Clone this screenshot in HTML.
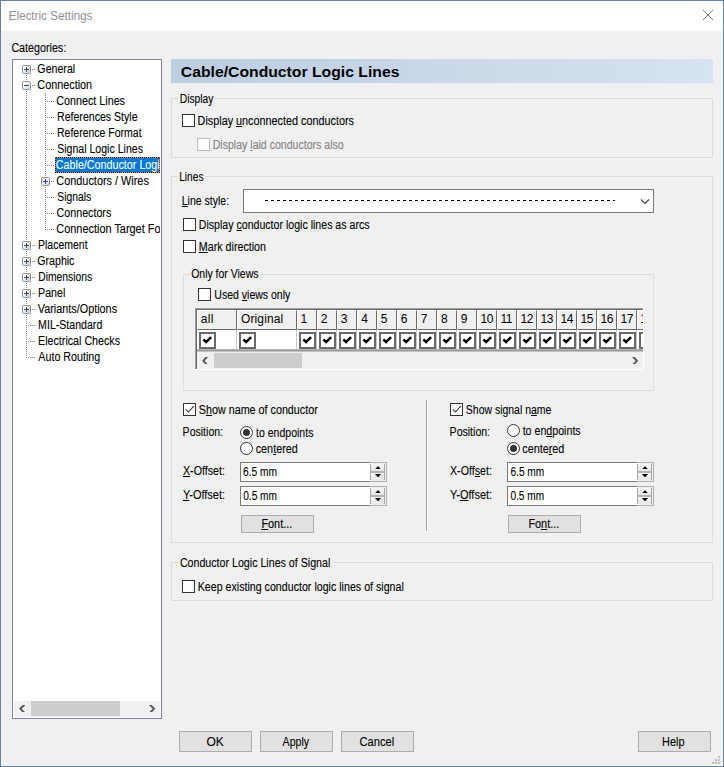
<!DOCTYPE html><html><head><meta charset="utf-8"><title>Electric Settings</title><style>
html,body{margin:0;padding:0;}
body{width:724px;height:767px;position:relative;overflow:hidden;background:#f0f0f0;font-family:'Liberation Sans', sans-serif;font-size:11px;color:#000;}
body div,body svg{position:absolute;}
.t{position:absolute;white-space:pre;line-height:1;-webkit-text-stroke:0.1px currentColor;}
u{text-decoration:underline;}
</style></head><body>
<div style="left:0px;top:0px;width:724px;height:767px;background:#f0f0f0;"></div><div style="left:1px;top:31px;width:722px;height:735px;box-sizing:border-box;border:1px solid #f5f5f5;border-top:none;"></div><div style="left:1px;top:1px;width:722px;height:30px;background:#fff;"></div><div style="left:0px;top:0px;width:724px;height:1px;background:#6183a2;"></div><div style="left:0px;top:0px;width:1px;height:767px;background:#6183a2;"></div><div style="left:723px;top:0px;width:1px;height:767px;background:#6183a2;"></div><div style="left:0px;top:766px;width:724px;height:1px;background:#6183a2;"></div><svg style="left:703px;top:10px" width="10" height="10" viewBox="0 0 10 10"><path d="M0 0 L10 10 M10 0 L0 10" stroke="#747474" stroke-width="1" fill="none"/></svg><div style="left:12px;top:59px;width:150px;height:660px;background:#fff;border:1px solid #7b8694;box-sizing:border-box;"></div><div style="left:26px;top:75px;width:1px;height:283px;background:repeating-linear-gradient(180deg,#808080 0 1px,transparent 1px 2px);"></div><div style="left:45px;top:93px;width:1px;height:137px;background:repeating-linear-gradient(180deg,#808080 0 1px,transparent 1px 2px);"></div><div style="left:32px;top:69px;width:3px;height:1px;background:repeating-linear-gradient(90deg,#808080 0 1px,transparent 1px 2px);"></div><div style="left:32px;top:85px;width:3px;height:1px;background:repeating-linear-gradient(90deg,#808080 0 1px,transparent 1px 2px);"></div><div style="left:47px;top:101px;width:7px;height:1px;background:repeating-linear-gradient(90deg,#808080 0 1px,transparent 1px 2px);"></div><div style="left:47px;top:117px;width:7px;height:1px;background:repeating-linear-gradient(90deg,#808080 0 1px,transparent 1px 2px);"></div><div style="left:47px;top:133px;width:7px;height:1px;background:repeating-linear-gradient(90deg,#808080 0 1px,transparent 1px 2px);"></div><div style="left:47px;top:149px;width:7px;height:1px;background:repeating-linear-gradient(90deg,#808080 0 1px,transparent 1px 2px);"></div><div style="left:47px;top:165px;width:7px;height:1px;background:repeating-linear-gradient(90deg,#808080 0 1px,transparent 1px 2px);"></div><div style="left:55px;top:157px;width:105px;height:16px;background:#0078d7;"></div><div style="left:55px;top:157px;width:105px;height:1px;background:repeating-linear-gradient(90deg,#ff8728 0 1px,#101010 1px 2px);"></div><div style="left:55px;top:172px;width:105px;height:1px;background:repeating-linear-gradient(90deg,#101010 0 1px,#ff8728 1px 2px);"></div><div style="left:55px;top:157px;width:1px;height:16px;background:repeating-linear-gradient(180deg,#ff8728 0 1px,#101010 1px 2px);"></div><div style="left:159px;top:157px;width:1px;height:16px;background:repeating-linear-gradient(180deg,#ff8728 0 1px,#101010 1px 2px);"></div><div style="left:55px;top:157px;width:105px;height:16px;overflow:hidden"><span class="t" id="t8" style="left:0px;top:2px;font-size:12px;transform:translateX(0.80px) scaleX(0.8950);transform-origin:0 0;color:#fff;">Cable/Conductor Logic Lines</span></div><div style="left:51px;top:181px;width:3px;height:1px;background:repeating-linear-gradient(90deg,#808080 0 1px,transparent 1px 2px);"></div><div style="left:47px;top:197px;width:7px;height:1px;background:repeating-linear-gradient(90deg,#808080 0 1px,transparent 1px 2px);"></div><div style="left:47px;top:213px;width:7px;height:1px;background:repeating-linear-gradient(90deg,#808080 0 1px,transparent 1px 2px);"></div><div style="left:47px;top:229px;width:7px;height:1px;background:repeating-linear-gradient(90deg,#808080 0 1px,transparent 1px 2px);"></div><div style="left:55px;top:221px;width:105px;height:16px;overflow:hidden"><span class="t" id="t12" style="left:1px;top:2px;font-size:12px;transform:translateX(0.30px) scaleX(0.9100);transform-origin:0 0;">Connection Target Format</span></div><div style="left:32px;top:245px;width:3px;height:1px;background:repeating-linear-gradient(90deg,#808080 0 1px,transparent 1px 2px);"></div><div style="left:32px;top:261px;width:3px;height:1px;background:repeating-linear-gradient(90deg,#808080 0 1px,transparent 1px 2px);"></div><div style="left:32px;top:277px;width:3px;height:1px;background:repeating-linear-gradient(90deg,#808080 0 1px,transparent 1px 2px);"></div><div style="left:32px;top:293px;width:3px;height:1px;background:repeating-linear-gradient(90deg,#808080 0 1px,transparent 1px 2px);"></div><div style="left:32px;top:309px;width:3px;height:1px;background:repeating-linear-gradient(90deg,#808080 0 1px,transparent 1px 2px);"></div><div style="left:28px;top:325px;width:7px;height:1px;background:repeating-linear-gradient(90deg,#808080 0 1px,transparent 1px 2px);"></div><div style="left:28px;top:341px;width:7px;height:1px;background:repeating-linear-gradient(90deg,#808080 0 1px,transparent 1px 2px);"></div><div style="left:28px;top:357px;width:7px;height:1px;background:repeating-linear-gradient(90deg,#808080 0 1px,transparent 1px 2px);"></div><div style="left:22px;top:65px;width:9px;height:9px;box-sizing:border-box;border:1px solid #919191;border-radius:1.5px;background:linear-gradient(135deg,#fff 20%,#d2d2d2);"></div><div style="left:24px;top:69px;width:5px;height:1px;background:#2d4a9a;"></div><div style="left:26px;top:67px;width:1px;height:5px;background:#2d4a9a;"></div><div style="left:22px;top:81px;width:9px;height:9px;box-sizing:border-box;border:1px solid #919191;border-radius:1.5px;background:linear-gradient(135deg,#fff 20%,#d2d2d2);"></div><div style="left:24px;top:85px;width:5px;height:1px;background:#2d4a9a;"></div><div style="left:41px;top:177px;width:9px;height:9px;box-sizing:border-box;border:1px solid #919191;border-radius:1.5px;background:linear-gradient(135deg,#fff 20%,#d2d2d2);"></div><div style="left:43px;top:181px;width:5px;height:1px;background:#2d4a9a;"></div><div style="left:45px;top:179px;width:1px;height:5px;background:#2d4a9a;"></div><div style="left:22px;top:241px;width:9px;height:9px;box-sizing:border-box;border:1px solid #919191;border-radius:1.5px;background:linear-gradient(135deg,#fff 20%,#d2d2d2);"></div><div style="left:24px;top:245px;width:5px;height:1px;background:#2d4a9a;"></div><div style="left:26px;top:243px;width:1px;height:5px;background:#2d4a9a;"></div><div style="left:22px;top:257px;width:9px;height:9px;box-sizing:border-box;border:1px solid #919191;border-radius:1.5px;background:linear-gradient(135deg,#fff 20%,#d2d2d2);"></div><div style="left:24px;top:261px;width:5px;height:1px;background:#2d4a9a;"></div><div style="left:26px;top:259px;width:1px;height:5px;background:#2d4a9a;"></div><div style="left:22px;top:273px;width:9px;height:9px;box-sizing:border-box;border:1px solid #919191;border-radius:1.5px;background:linear-gradient(135deg,#fff 20%,#d2d2d2);"></div><div style="left:24px;top:277px;width:5px;height:1px;background:#2d4a9a;"></div><div style="left:26px;top:275px;width:1px;height:5px;background:#2d4a9a;"></div><div style="left:22px;top:289px;width:9px;height:9px;box-sizing:border-box;border:1px solid #919191;border-radius:1.5px;background:linear-gradient(135deg,#fff 20%,#d2d2d2);"></div><div style="left:24px;top:293px;width:5px;height:1px;background:#2d4a9a;"></div><div style="left:26px;top:291px;width:1px;height:5px;background:#2d4a9a;"></div><div style="left:22px;top:305px;width:9px;height:9px;box-sizing:border-box;border:1px solid #919191;border-radius:1.5px;background:linear-gradient(135deg,#fff 20%,#d2d2d2);"></div><div style="left:24px;top:309px;width:5px;height:1px;background:#2d4a9a;"></div><div style="left:26px;top:307px;width:1px;height:5px;background:#2d4a9a;"></div><div style="left:14px;top:701px;width:146px;height:16px;background:#f0f0f0;"></div><div style="left:31px;top:701px;width:89px;height:15px;background:#cdcdcd;"></div><svg style="left:18.8px;top:704.8px" width="6.4" height="7.4" viewBox="0 0 6.4 7.4"><path d="M3.70 0.00 L6.40 0.00 L2.70 3.70 L6.40 7.40 L3.70 7.40 L0.00 3.70Z" fill="#555"/></svg><svg style="left:149.0px;top:704.8px" width="6.4" height="7.4" viewBox="0 0 6.4 7.4"><path d="M2.70 0.00 L0.00 0.00 L3.70 3.70 L0.00 7.40 L2.70 7.40 L6.40 3.70Z" fill="#555"/></svg><div style="left:171px;top:59px;width:542px;height:24px;background:linear-gradient(90deg,#bdcde0,#d6e3f0);"></div><div style="left:171px;top:98px;width:542px;height:60px;box-sizing:border-box;border:1px solid #dcdcdc;"></div><div style="left:178px;top:98px;width:37px;height:1px;background:#f0f0f0;"></div><div style="left:171px;top:176px;width:542px;height:367px;box-sizing:border-box;border:1px solid #dcdcdc;"></div><div style="left:177.5px;top:176px;width:27.5px;height:1px;background:#f0f0f0;"></div><div style="left:183px;top:274px;width:471px;height:117px;box-sizing:border-box;border:1px solid #dcdcdc;"></div><div style="left:189.5px;top:274px;width:70.5px;height:1px;background:#f0f0f0;"></div><div style="left:171px;top:562px;width:542px;height:39px;box-sizing:border-box;border:1px solid #dcdcdc;"></div><div style="left:178px;top:562px;width:153.5px;height:1px;background:#f0f0f0;"></div><div style="left:182px;top:114px;width:13px;height:13px;box-sizing:border-box;border:1px solid #333;background:#fff;"></div><div style="left:197px;top:138px;width:13px;height:13px;box-sizing:border-box;border:1px solid #bcbcbc;background:#fff;"></div><div style="left:243px;top:189px;width:411px;height:24px;box-sizing:border-box;border:1px solid #7a7a7a;background:#fff;"></div><div style="left:265px;top:200px;width:350px;height:1px;background:repeating-linear-gradient(90deg,#000 0 3px,transparent 3px 6px);"></div><svg style="left:640px;top:198px" width="10" height="7" viewBox="0 0 10 7"><path d="M1 1.5 L5 5.5 L9 1.5" stroke="#404040" stroke-width="1.1" fill="none"/></svg><div style="left:183px;top:218px;width:13px;height:13px;box-sizing:border-box;border:1px solid #333;background:#fff;"></div><div style="left:183px;top:240px;width:13px;height:13px;box-sizing:border-box;border:1px solid #333;background:#fff;"></div><div style="left:198px;top:288px;width:13px;height:13px;box-sizing:border-box;border:1px solid #333;background:#fff;"></div><div style="left:195px;top:308px;width:449px;height:62px;background:#f0f0f0;"></div><div style="left:195px;top:308px;width:449px;height:1px;background:#a0a0a0;"></div><div style="left:195px;top:308px;width:1px;height:62px;background:#a0a0a0;"></div><div style="left:196px;top:309px;width:447px;height:1px;background:#696969;"></div><div style="left:196px;top:309px;width:1px;height:60px;background:#696969;"></div><div style="left:195px;top:369px;width:449px;height:1px;background:#fff;"></div><div style="left:643px;top:308px;width:1px;height:62px;background:#fff;"></div><div style="left:197px;top:330px;width:446px;height:19px;background:#fff;"></div><div style="left:197px;top:310px;width:40px;height:20px;box-sizing:border-box;background:#f0f0f0;border-right:1px solid #696969;border-bottom:1px solid #696969;border-left:1px solid #fff;border-top:1px solid #fff;"></div><div style="left:236px;top:330px;width:1px;height:19px;background:#c8c8c8;"></div><div style="left:199px;top:332px;width:17px;height:17px;box-sizing:border-box;border:2px solid #696969;background:#fff;"></div><svg style="left:199px;top:332px" width="17" height="17" viewBox="0 0 17 17"><path d="M4.4 7.4 L7.1 10.1 L12.1 5.1" stroke="#000" stroke-width="2.5" fill="none"/></svg><div style="left:237px;top:310px;width:60px;height:20px;box-sizing:border-box;background:#f0f0f0;border-right:1px solid #696969;border-bottom:1px solid #696969;border-left:1px solid #fff;border-top:1px solid #fff;"></div><div style="left:296px;top:330px;width:1px;height:19px;background:#c8c8c8;"></div><div style="left:239px;top:332px;width:17px;height:17px;box-sizing:border-box;border:2px solid #696969;background:#fff;"></div><svg style="left:239px;top:332px" width="17" height="17" viewBox="0 0 17 17"><path d="M4.4 7.4 L7.1 10.1 L12.1 5.1" stroke="#000" stroke-width="2.5" fill="none"/></svg><div style="left:297px;top:310px;width:20px;height:20px;box-sizing:border-box;background:#f0f0f0;border-right:1px solid #696969;border-bottom:1px solid #696969;border-left:1px solid #fff;border-top:1px solid #fff;"></div><div style="left:316px;top:330px;width:1px;height:19px;background:#c8c8c8;"></div><div style="left:299px;top:332px;width:17px;height:17px;box-sizing:border-box;border:2px solid #696969;background:#fff;"></div><svg style="left:299px;top:332px" width="17" height="17" viewBox="0 0 17 17"><path d="M4.4 7.4 L7.1 10.1 L12.1 5.1" stroke="#000" stroke-width="2.5" fill="none"/></svg><div style="left:317px;top:310px;width:20px;height:20px;box-sizing:border-box;background:#f0f0f0;border-right:1px solid #696969;border-bottom:1px solid #696969;border-left:1px solid #fff;border-top:1px solid #fff;"></div><div style="left:336px;top:330px;width:1px;height:19px;background:#c8c8c8;"></div><div style="left:319px;top:332px;width:17px;height:17px;box-sizing:border-box;border:2px solid #696969;background:#fff;"></div><svg style="left:319px;top:332px" width="17" height="17" viewBox="0 0 17 17"><path d="M4.4 7.4 L7.1 10.1 L12.1 5.1" stroke="#000" stroke-width="2.5" fill="none"/></svg><div style="left:337px;top:310px;width:20px;height:20px;box-sizing:border-box;background:#f0f0f0;border-right:1px solid #696969;border-bottom:1px solid #696969;border-left:1px solid #fff;border-top:1px solid #fff;"></div><div style="left:356px;top:330px;width:1px;height:19px;background:#c8c8c8;"></div><div style="left:339px;top:332px;width:17px;height:17px;box-sizing:border-box;border:2px solid #696969;background:#fff;"></div><svg style="left:339px;top:332px" width="17" height="17" viewBox="0 0 17 17"><path d="M4.4 7.4 L7.1 10.1 L12.1 5.1" stroke="#000" stroke-width="2.5" fill="none"/></svg><div style="left:357px;top:310px;width:20px;height:20px;box-sizing:border-box;background:#f0f0f0;border-right:1px solid #696969;border-bottom:1px solid #696969;border-left:1px solid #fff;border-top:1px solid #fff;"></div><div style="left:376px;top:330px;width:1px;height:19px;background:#c8c8c8;"></div><div style="left:359px;top:332px;width:17px;height:17px;box-sizing:border-box;border:2px solid #696969;background:#fff;"></div><svg style="left:359px;top:332px" width="17" height="17" viewBox="0 0 17 17"><path d="M4.4 7.4 L7.1 10.1 L12.1 5.1" stroke="#000" stroke-width="2.5" fill="none"/></svg><div style="left:377px;top:310px;width:20px;height:20px;box-sizing:border-box;background:#f0f0f0;border-right:1px solid #696969;border-bottom:1px solid #696969;border-left:1px solid #fff;border-top:1px solid #fff;"></div><div style="left:396px;top:330px;width:1px;height:19px;background:#c8c8c8;"></div><div style="left:379px;top:332px;width:17px;height:17px;box-sizing:border-box;border:2px solid #696969;background:#fff;"></div><svg style="left:379px;top:332px" width="17" height="17" viewBox="0 0 17 17"><path d="M4.4 7.4 L7.1 10.1 L12.1 5.1" stroke="#000" stroke-width="2.5" fill="none"/></svg><div style="left:397px;top:310px;width:20px;height:20px;box-sizing:border-box;background:#f0f0f0;border-right:1px solid #696969;border-bottom:1px solid #696969;border-left:1px solid #fff;border-top:1px solid #fff;"></div><div style="left:416px;top:330px;width:1px;height:19px;background:#c8c8c8;"></div><div style="left:399px;top:332px;width:17px;height:17px;box-sizing:border-box;border:2px solid #696969;background:#fff;"></div><svg style="left:399px;top:332px" width="17" height="17" viewBox="0 0 17 17"><path d="M4.4 7.4 L7.1 10.1 L12.1 5.1" stroke="#000" stroke-width="2.5" fill="none"/></svg><div style="left:417px;top:310px;width:20px;height:20px;box-sizing:border-box;background:#f0f0f0;border-right:1px solid #696969;border-bottom:1px solid #696969;border-left:1px solid #fff;border-top:1px solid #fff;"></div><div style="left:436px;top:330px;width:1px;height:19px;background:#c8c8c8;"></div><div style="left:419px;top:332px;width:17px;height:17px;box-sizing:border-box;border:2px solid #696969;background:#fff;"></div><svg style="left:419px;top:332px" width="17" height="17" viewBox="0 0 17 17"><path d="M4.4 7.4 L7.1 10.1 L12.1 5.1" stroke="#000" stroke-width="2.5" fill="none"/></svg><div style="left:437px;top:310px;width:20px;height:20px;box-sizing:border-box;background:#f0f0f0;border-right:1px solid #696969;border-bottom:1px solid #696969;border-left:1px solid #fff;border-top:1px solid #fff;"></div><div style="left:456px;top:330px;width:1px;height:19px;background:#c8c8c8;"></div><div style="left:439px;top:332px;width:17px;height:17px;box-sizing:border-box;border:2px solid #696969;background:#fff;"></div><svg style="left:439px;top:332px" width="17" height="17" viewBox="0 0 17 17"><path d="M4.4 7.4 L7.1 10.1 L12.1 5.1" stroke="#000" stroke-width="2.5" fill="none"/></svg><div style="left:457px;top:310px;width:20px;height:20px;box-sizing:border-box;background:#f0f0f0;border-right:1px solid #696969;border-bottom:1px solid #696969;border-left:1px solid #fff;border-top:1px solid #fff;"></div><div style="left:476px;top:330px;width:1px;height:19px;background:#c8c8c8;"></div><div style="left:459px;top:332px;width:17px;height:17px;box-sizing:border-box;border:2px solid #696969;background:#fff;"></div><svg style="left:459px;top:332px" width="17" height="17" viewBox="0 0 17 17"><path d="M4.4 7.4 L7.1 10.1 L12.1 5.1" stroke="#000" stroke-width="2.5" fill="none"/></svg><div style="left:477px;top:310px;width:20px;height:20px;box-sizing:border-box;background:#f0f0f0;border-right:1px solid #696969;border-bottom:1px solid #696969;border-left:1px solid #fff;border-top:1px solid #fff;"></div><div style="left:496px;top:330px;width:1px;height:19px;background:#c8c8c8;"></div><div style="left:479px;top:332px;width:17px;height:17px;box-sizing:border-box;border:2px solid #696969;background:#fff;"></div><svg style="left:479px;top:332px" width="17" height="17" viewBox="0 0 17 17"><path d="M4.4 7.4 L7.1 10.1 L12.1 5.1" stroke="#000" stroke-width="2.5" fill="none"/></svg><div style="left:497px;top:310px;width:20px;height:20px;box-sizing:border-box;background:#f0f0f0;border-right:1px solid #696969;border-bottom:1px solid #696969;border-left:1px solid #fff;border-top:1px solid #fff;"></div><div style="left:516px;top:330px;width:1px;height:19px;background:#c8c8c8;"></div><div style="left:499px;top:332px;width:17px;height:17px;box-sizing:border-box;border:2px solid #696969;background:#fff;"></div><svg style="left:499px;top:332px" width="17" height="17" viewBox="0 0 17 17"><path d="M4.4 7.4 L7.1 10.1 L12.1 5.1" stroke="#000" stroke-width="2.5" fill="none"/></svg><div style="left:517px;top:310px;width:20px;height:20px;box-sizing:border-box;background:#f0f0f0;border-right:1px solid #696969;border-bottom:1px solid #696969;border-left:1px solid #fff;border-top:1px solid #fff;"></div><div style="left:536px;top:330px;width:1px;height:19px;background:#c8c8c8;"></div><div style="left:519px;top:332px;width:17px;height:17px;box-sizing:border-box;border:2px solid #696969;background:#fff;"></div><svg style="left:519px;top:332px" width="17" height="17" viewBox="0 0 17 17"><path d="M4.4 7.4 L7.1 10.1 L12.1 5.1" stroke="#000" stroke-width="2.5" fill="none"/></svg><div style="left:537px;top:310px;width:20px;height:20px;box-sizing:border-box;background:#f0f0f0;border-right:1px solid #696969;border-bottom:1px solid #696969;border-left:1px solid #fff;border-top:1px solid #fff;"></div><div style="left:556px;top:330px;width:1px;height:19px;background:#c8c8c8;"></div><div style="left:539px;top:332px;width:17px;height:17px;box-sizing:border-box;border:2px solid #696969;background:#fff;"></div><svg style="left:539px;top:332px" width="17" height="17" viewBox="0 0 17 17"><path d="M4.4 7.4 L7.1 10.1 L12.1 5.1" stroke="#000" stroke-width="2.5" fill="none"/></svg><div style="left:557px;top:310px;width:20px;height:20px;box-sizing:border-box;background:#f0f0f0;border-right:1px solid #696969;border-bottom:1px solid #696969;border-left:1px solid #fff;border-top:1px solid #fff;"></div><div style="left:576px;top:330px;width:1px;height:19px;background:#c8c8c8;"></div><div style="left:559px;top:332px;width:17px;height:17px;box-sizing:border-box;border:2px solid #696969;background:#fff;"></div><svg style="left:559px;top:332px" width="17" height="17" viewBox="0 0 17 17"><path d="M4.4 7.4 L7.1 10.1 L12.1 5.1" stroke="#000" stroke-width="2.5" fill="none"/></svg><div style="left:577px;top:310px;width:20px;height:20px;box-sizing:border-box;background:#f0f0f0;border-right:1px solid #696969;border-bottom:1px solid #696969;border-left:1px solid #fff;border-top:1px solid #fff;"></div><div style="left:596px;top:330px;width:1px;height:19px;background:#c8c8c8;"></div><div style="left:579px;top:332px;width:17px;height:17px;box-sizing:border-box;border:2px solid #696969;background:#fff;"></div><svg style="left:579px;top:332px" width="17" height="17" viewBox="0 0 17 17"><path d="M4.4 7.4 L7.1 10.1 L12.1 5.1" stroke="#000" stroke-width="2.5" fill="none"/></svg><div style="left:597px;top:310px;width:20px;height:20px;box-sizing:border-box;background:#f0f0f0;border-right:1px solid #696969;border-bottom:1px solid #696969;border-left:1px solid #fff;border-top:1px solid #fff;"></div><div style="left:616px;top:330px;width:1px;height:19px;background:#c8c8c8;"></div><div style="left:599px;top:332px;width:17px;height:17px;box-sizing:border-box;border:2px solid #696969;background:#fff;"></div><svg style="left:599px;top:332px" width="17" height="17" viewBox="0 0 17 17"><path d="M4.4 7.4 L7.1 10.1 L12.1 5.1" stroke="#000" stroke-width="2.5" fill="none"/></svg><div style="left:617px;top:310px;width:20px;height:20px;box-sizing:border-box;background:#f0f0f0;border-right:1px solid #696969;border-bottom:1px solid #696969;border-left:1px solid #fff;border-top:1px solid #fff;"></div><div style="left:636px;top:330px;width:1px;height:19px;background:#c8c8c8;"></div><div style="left:619px;top:332px;width:17px;height:17px;box-sizing:border-box;border:2px solid #696969;background:#fff;"></div><svg style="left:619px;top:332px" width="17" height="17" viewBox="0 0 17 17"><path d="M4.4 7.4 L7.1 10.1 L12.1 5.1" stroke="#000" stroke-width="2.5" fill="none"/></svg><div style="left:637px;top:310px;width:6px;height:20px;box-sizing:border-box;background:#f0f0f0;border-bottom:1px solid #696969;border-left:1px solid #fff;border-top:1px solid #fff;"></div><div style="left:637px;top:310px;width:6px;height:19px;overflow:hidden"><span class="t" id="t51" style="left:3px;top:3px;font-size:12px;transform:translateX(0.20px);transform-origin:0 0;letter-spacing:-0.600px;-webkit-text-stroke:0;">18</span></div><div style="left:639px;top:332px;width:4px;height:17px;box-sizing:border-box;border:2px solid #696969;border-right:none;background:#fff;"></div><div style="left:197px;top:349px;width:446px;height:1px;background:#b4b4b4;"></div><div style="left:197px;top:350px;width:446px;height:1px;background:#9c9c9c;"></div><div style="left:197px;top:351px;width:446px;height:1px;background:#c0c0c0;"></div><div style="left:197px;top:352px;width:446px;height:17px;background:#f0f0f0;"></div><div style="left:214px;top:353px;width:88px;height:15px;background:#cdcdcd;"></div><svg style="left:202.1px;top:356.7px" width="6.2" height="7.6" viewBox="0 0 6.2 7.6"><path d="M3.50 0.00 L6.20 0.00 L2.70 3.80 L6.20 7.60 L3.50 7.60 L0.00 3.80Z" fill="#5a5a5a"/></svg><svg style="left:631.9px;top:356.7px" width="6.2" height="7.6" viewBox="0 0 6.2 7.6"><path d="M2.70 0.00 L0.00 0.00 L3.50 3.80 L0.00 7.60 L2.70 7.60 L6.20 3.80Z" fill="#5a5a5a"/></svg><div style="left:183px;top:403px;width:13px;height:13px;box-sizing:border-box;border:1px solid #333;background:#fff;"></div><svg style="left:183px;top:403px" width="13" height="13" viewBox="0 0 13 13"><path d="M2.7 6.3 L5.4 9 L10.7 3.2" stroke="#333" stroke-width="1.05" fill="none"/></svg><div style="left:240px;top:426px;width:13px;height:13px;box-sizing:border-box;border:1px solid #333;background:#fff;border-radius:50%;"></div><div style="left:243px;top:429px;width:7px;height:7px;background:#333;border-radius:50%;"></div><div style="left:240px;top:442px;width:13px;height:13px;box-sizing:border-box;border:1px solid #333;background:#fff;border-radius:50%;"></div><div style="left:240px;top:462px;width:130px;height:20px;box-sizing:border-box;border:1px solid #7a7a7a;border-right:none;background:#fff;"></div><div style="left:370px;top:462px;width:17px;height:20px;box-sizing:border-box;border:1px solid #adb2b5;border-left:none;background:#f0f0f0;"></div><div style="left:370px;top:464px;width:15px;height:7px;box-sizing:border-box;border-left:1px solid #a8a8a8;border-right:1px solid #a8a8a8;background:linear-gradient(#f6f6f6,#e8e8e8);"></div><div style="left:370px;top:471px;width:15px;height:2px;background:#b4b4b4;"></div><div style="left:370px;top:473px;width:15px;height:7px;box-sizing:border-box;border-left:1px solid #a8a8a8;border-right:1px solid #a8a8a8;background:linear-gradient(#f6f6f6,#e8e8e8);"></div><svg style="left:374.5px;top:465.8px" width="6" height="3.4" viewBox="0 0 6 3.4"><path d="M0 3.4 L3 0 L6 3.4Z" fill="#000"/></svg><svg style="left:374.5px;top:473.8px" width="6" height="3.4" viewBox="0 0 6 3.4"><path d="M0 0 L3 3.4 L6 0Z" fill="#000"/></svg><div style="left:240px;top:486px;width:130px;height:20px;box-sizing:border-box;border:1px solid #7a7a7a;border-right:none;background:#fff;"></div><div style="left:370px;top:486px;width:17px;height:20px;box-sizing:border-box;border:1px solid #adb2b5;border-left:none;background:#f0f0f0;"></div><div style="left:370px;top:488px;width:15px;height:7px;box-sizing:border-box;border-left:1px solid #a8a8a8;border-right:1px solid #a8a8a8;background:linear-gradient(#f6f6f6,#e8e8e8);"></div><div style="left:370px;top:495px;width:15px;height:2px;background:#b4b4b4;"></div><div style="left:370px;top:497px;width:15px;height:7px;box-sizing:border-box;border-left:1px solid #a8a8a8;border-right:1px solid #a8a8a8;background:linear-gradient(#f6f6f6,#e8e8e8);"></div><svg style="left:374.5px;top:489.8px" width="6" height="3.4" viewBox="0 0 6 3.4"><path d="M0 3.4 L3 0 L6 3.4Z" fill="#000"/></svg><svg style="left:374.5px;top:497.8px" width="6" height="3.4" viewBox="0 0 6 3.4"><path d="M0 0 L3 3.4 L6 0Z" fill="#000"/></svg><div style="left:241px;top:515px;width:73px;height:18px;box-sizing:border-box;border:1px solid #adadad;background:#e1e1e1;"></div><div style="left:426px;top:400px;width:1px;height:131px;background:#a0a0a0;"></div><div style="left:427px;top:400px;width:1px;height:132px;background:#fff;"></div><div style="left:426px;top:531px;width:1px;height:1px;background:#fff;"></div><div style="left:450px;top:403px;width:13px;height:13px;box-sizing:border-box;border:1px solid #333;background:#fff;"></div><svg style="left:450px;top:403px" width="13" height="13" viewBox="0 0 13 13"><path d="M2.7 6.3 L5.4 9 L10.7 3.2" stroke="#333" stroke-width="1.05" fill="none"/></svg><div style="left:507px;top:424px;width:13px;height:13px;box-sizing:border-box;border:1px solid #333;background:#fff;border-radius:50%;"></div><div style="left:507px;top:442px;width:13px;height:13px;box-sizing:border-box;border:1px solid #333;background:#fff;border-radius:50%;"></div><div style="left:510px;top:445px;width:7px;height:7px;background:#333;border-radius:50%;"></div><div style="left:507px;top:462px;width:130px;height:20px;box-sizing:border-box;border:1px solid #7a7a7a;border-right:none;background:#fff;"></div><div style="left:637px;top:462px;width:17px;height:20px;box-sizing:border-box;border:1px solid #adb2b5;border-left:none;background:#f0f0f0;"></div><div style="left:637px;top:464px;width:15px;height:7px;box-sizing:border-box;border-left:1px solid #a8a8a8;border-right:1px solid #a8a8a8;background:linear-gradient(#f6f6f6,#e8e8e8);"></div><div style="left:637px;top:471px;width:15px;height:2px;background:#b4b4b4;"></div><div style="left:637px;top:473px;width:15px;height:7px;box-sizing:border-box;border-left:1px solid #a8a8a8;border-right:1px solid #a8a8a8;background:linear-gradient(#f6f6f6,#e8e8e8);"></div><svg style="left:641.5px;top:465.8px" width="6" height="3.4" viewBox="0 0 6 3.4"><path d="M0 3.4 L3 0 L6 3.4Z" fill="#000"/></svg><svg style="left:641.5px;top:473.8px" width="6" height="3.4" viewBox="0 0 6 3.4"><path d="M0 0 L3 3.4 L6 0Z" fill="#000"/></svg><div style="left:507px;top:486px;width:130px;height:20px;box-sizing:border-box;border:1px solid #7a7a7a;border-right:none;background:#fff;"></div><div style="left:637px;top:486px;width:17px;height:20px;box-sizing:border-box;border:1px solid #adb2b5;border-left:none;background:#f0f0f0;"></div><div style="left:637px;top:488px;width:15px;height:7px;box-sizing:border-box;border-left:1px solid #a8a8a8;border-right:1px solid #a8a8a8;background:linear-gradient(#f6f6f6,#e8e8e8);"></div><div style="left:637px;top:495px;width:15px;height:2px;background:#b4b4b4;"></div><div style="left:637px;top:497px;width:15px;height:7px;box-sizing:border-box;border-left:1px solid #a8a8a8;border-right:1px solid #a8a8a8;background:linear-gradient(#f6f6f6,#e8e8e8);"></div><svg style="left:641.5px;top:489.8px" width="6" height="3.4" viewBox="0 0 6 3.4"><path d="M0 3.4 L3 0 L6 3.4Z" fill="#000"/></svg><svg style="left:641.5px;top:497.8px" width="6" height="3.4" viewBox="0 0 6 3.4"><path d="M0 0 L3 3.4 L6 0Z" fill="#000"/></svg><div style="left:508px;top:515px;width:73px;height:18px;box-sizing:border-box;border:1px solid #adadad;background:#e1e1e1;"></div><div style="left:182px;top:580px;width:13px;height:13px;box-sizing:border-box;border:1px solid #333;background:#fff;"></div><div style="left:179px;top:731px;width:73px;height:21px;box-sizing:border-box;border:1px solid #adadad;background:#e1e1e1;"></div><div style="left:260px;top:731px;width:73px;height:21px;box-sizing:border-box;border:1px solid #adadad;background:#e1e1e1;"></div><div style="left:341px;top:731px;width:73px;height:21px;box-sizing:border-box;border:1px solid #adadad;background:#e1e1e1;"></div><div style="left:638px;top:731px;width:73px;height:21px;box-sizing:border-box;border:1px solid #adadad;background:#e1e1e1;"></div><div style="left:718px;top:756px;width:2px;height:2px;background:#bfbfbf;"></div><div style="left:715px;top:759px;width:2px;height:2px;background:#bfbfbf;"></div><div style="left:718px;top:759px;width:2px;height:2px;background:#bfbfbf;"></div><div style="left:712px;top:762px;width:2px;height:2px;background:#bfbfbf;"></div><div style="left:715px;top:762px;width:2px;height:2px;background:#bfbfbf;"></div><div style="left:718px;top:762px;width:2px;height:2px;background:#bfbfbf;"></div>
<span class="t" id="t0" style="left:8px;top:10px;font-size:12px;transform:translateX(0.51px);transform-origin:0 0;letter-spacing:-0.124px;color:#939393;-webkit-text-stroke:0;">Electric Settings</span>
<span class="t" id="t1" style="left:11px;top:42px;font-size:12px;transform:translateX(0.38px) scaleX(0.8935);transform-origin:0 0;">Categories:</span>
<span class="t" id="t2" style="left:37px;top:63px;font-size:12px;transform:translateX(0.36px) scaleX(0.8862);transform-origin:0 0;">General</span>
<span class="t" id="t3" style="left:37px;top:79px;font-size:12px;transform:translateX(0.32px) scaleX(0.9028);transform-origin:0 0;">Connection</span>
<span class="t" id="t4" style="left:56px;top:95px;font-size:12px;transform:translateX(0.35px) scaleX(0.8946);transform-origin:0 0;">Connect Lines</span>
<span class="t" id="t5" style="left:57px;top:111px;font-size:12px;transform:translateX(0.00px) scaleX(0.8820);transform-origin:0 0;">References Style</span>
<span class="t" id="t6" style="left:56px;top:127px;font-size:12px;transform:translateX(0.99px) scaleX(0.8747);transform-origin:0 0;">Reference Format</span>
<span class="t" id="t7" style="left:57px;top:143px;font-size:12px;transform:translateX(0.17px) scaleX(0.8804);transform-origin:0 0;">Signal Logic Lines</span>
<span class="t" id="t9" style="left:56px;top:175px;font-size:12px;transform:translateX(0.35px) scaleX(0.9067);transform-origin:0 0;">Conductors / Wires</span>
<span class="t" id="t10" style="left:57px;top:191px;font-size:12px;transform:translateX(0.32px) scaleX(0.8572);transform-origin:0 0;">Signals</span>
<span class="t" id="t11" style="left:56px;top:207px;font-size:12px;transform:translateX(0.56px) scaleX(0.8917);transform-origin:0 0;">Connectors</span>
<span class="t" id="t13" style="left:38px;top:239px;font-size:12px;transform:translateX(0.04px) scaleX(0.8744);transform-origin:0 0;">Placement</span>
<span class="t" id="t14" style="left:37px;top:255px;font-size:12px;transform:translateX(0.35px) scaleX(0.8821);transform-origin:0 0;">Graphic</span>
<span class="t" id="t15" style="left:38px;top:271px;font-size:12px;transform:translateX(0.22px) scaleX(0.8588);transform-origin:0 0;">Dimensions</span>
<span class="t" id="t16" style="left:38px;top:287px;font-size:12px;transform:translateX(0.08px) scaleX(0.8874);transform-origin:0 0;">Panel</span>
<span class="t" id="t17" style="left:37px;top:303px;font-size:12px;transform:translateX(0.76px) scaleX(0.9031);transform-origin:0 0;">Variants/Options</span>
<span class="t" id="t18" style="left:38px;top:319px;font-size:12px;transform:translateX(0.12px) scaleX(0.8824);transform-origin:0 0;">MIL-Standard</span>
<span class="t" id="t19" style="left:38px;top:335px;font-size:12px;transform:translateX(0.07px) scaleX(0.8904);transform-origin:0 0;">Electrical Checks</span>
<span class="t" id="t20" style="left:38px;top:351px;font-size:12px;transform:translateX(0.36px) scaleX(0.8918);transform-origin:0 0;">Auto Routing</span>
<span class="t" id="t21" style="left:180px;top:64px;font-size:15px;font-weight:bold;transform:translateX(0.78px) scaleX(1.0496);transform-origin:0 0;-webkit-text-stroke:0;">Cable/Conductor Logic Lines</span>
<span class="t" id="t22" style="left:179px;top:93px;font-size:12px;transform:translateX(0.75px) scaleX(0.8525);transform-origin:0 0;">Display</span>
<span class="t" id="t23" style="left:179px;top:171px;font-size:12px;transform:translateX(0.21px) scaleX(0.8465);transform-origin:0 0;">Lines</span>
<span class="t" id="t24" style="left:191px;top:268px;font-size:12px;transform:translateX(0.23px) scaleX(0.8710);transform-origin:0 0;">Only for Views</span>
<span class="t" id="t25" style="left:179px;top:557px;font-size:12px;transform:translateX(0.90px) scaleX(0.8875);transform-origin:0 0;">Conductor Logic Lines of Signal</span>
<span class="t" id="t26" style="left:197px;top:115px;font-size:12px;transform:translateX(0.59px) scaleX(0.9016);transform-origin:0 0;">Display <u>u</u>nconnected conductors</span>
<span class="t" id="t27" style="left:212px;top:139px;font-size:12px;transform:translateX(0.72px) scaleX(0.8802);transform-origin:0 0;color:#838383;">Display <u>l</u>aid conductors also</span>
<span class="t" id="t28" style="left:181px;top:195px;font-size:12px;transform:translateX(0.73px) scaleX(0.8764);transform-origin:0 0;"><u>L</u>ine style:</span>
<span class="t" id="t29" style="left:198px;top:219px;font-size:12px;transform:translateX(0.79px) scaleX(0.8826);transform-origin:0 0;">Display <u>c</u>onductor logic lines as arcs</span>
<span class="t" id="t30" style="left:198px;top:241px;font-size:12px;transform:translateX(0.79px) scaleX(0.8920);transform-origin:0 0;"><u>M</u>ark direction</span>
<span class="t" id="t31" style="left:214px;top:289px;font-size:12px;transform:translateX(0.30px) scaleX(0.8765);transform-origin:0 0;">Used <u>v</u>iews only</span>
<span class="t" id="t32" style="left:200px;top:313px;font-size:12px;transform:translateX(0.73px);transform-origin:0 0;letter-spacing:0.339px;-webkit-text-stroke:0;">all</span>
<span class="t" id="t33" style="left:240px;top:313px;font-size:12px;transform:translateX(0.90px);transform-origin:0 0;letter-spacing:0.145px;-webkit-text-stroke:0;">Original</span>
<span class="t" id="t34" style="left:300px;top:313px;font-size:12px;transform:translateX(0.58px);transform-origin:0 0;letter-spacing:-0.6px;-webkit-text-stroke:0;">1</span>
<span class="t" id="t35" style="left:320px;top:313px;font-size:12px;transform:translateX(0.80px);transform-origin:0 0;letter-spacing:-0.6px;-webkit-text-stroke:0;">2</span>
<span class="t" id="t36" style="left:340px;top:313px;font-size:12px;transform:translateX(0.86px);transform-origin:0 0;letter-spacing:-0.6px;-webkit-text-stroke:0;">3</span>
<span class="t" id="t37" style="left:361px;top:313px;font-size:12px;transform:translateX(0.29px);transform-origin:0 0;letter-spacing:-0.6px;-webkit-text-stroke:0;">4</span>
<span class="t" id="t38" style="left:380px;top:313px;font-size:12px;transform:translateX(0.84px);transform-origin:0 0;letter-spacing:-0.6px;-webkit-text-stroke:0;">5</span>
<span class="t" id="t39" style="left:400px;top:313px;font-size:12px;transform:translateX(0.78px);transform-origin:0 0;letter-spacing:-0.6px;-webkit-text-stroke:0;">6</span>
<span class="t" id="t40" style="left:420px;top:313px;font-size:12px;transform:translateX(0.83px);transform-origin:0 0;letter-spacing:-0.6px;-webkit-text-stroke:0;">7</span>
<span class="t" id="t41" style="left:440px;top:313px;font-size:12px;transform:translateX(0.90px);transform-origin:0 0;letter-spacing:-0.6px;-webkit-text-stroke:0;">8</span>
<span class="t" id="t42" style="left:460px;top:313px;font-size:12px;transform:translateX(0.75px);transform-origin:0 0;letter-spacing:-0.6px;-webkit-text-stroke:0;">9</span>
<span class="t" id="t43" style="left:480px;top:313px;font-size:12px;transform:translateX(0.58px);transform-origin:0 0;letter-spacing:-0.6px;-webkit-text-stroke:0;">10</span>
<span class="t" id="t44" style="left:500px;top:313px;font-size:12px;transform:translateX(0.58px);transform-origin:0 0;letter-spacing:-0.6px;-webkit-text-stroke:0;">11</span>
<span class="t" id="t45" style="left:520px;top:313px;font-size:12px;transform:translateX(0.58px);transform-origin:0 0;letter-spacing:-0.6px;-webkit-text-stroke:0;">12</span>
<span class="t" id="t46" style="left:540px;top:313px;font-size:12px;transform:translateX(0.58px);transform-origin:0 0;letter-spacing:-0.6px;-webkit-text-stroke:0;">13</span>
<span class="t" id="t47" style="left:560px;top:313px;font-size:12px;transform:translateX(0.58px);transform-origin:0 0;letter-spacing:-0.6px;-webkit-text-stroke:0;">14</span>
<span class="t" id="t48" style="left:580px;top:313px;font-size:12px;transform:translateX(0.58px);transform-origin:0 0;letter-spacing:-0.6px;-webkit-text-stroke:0;">15</span>
<span class="t" id="t49" style="left:600px;top:313px;font-size:12px;transform:translateX(0.58px);transform-origin:0 0;letter-spacing:-0.6px;-webkit-text-stroke:0;">16</span>
<span class="t" id="t50" style="left:620px;top:313px;font-size:12px;transform:translateX(0.58px);transform-origin:0 0;letter-spacing:-0.6px;-webkit-text-stroke:0;">17</span>
<span class="t" id="t52" style="left:198px;top:404px;font-size:12px;transform:translateX(0.80px) scaleX(0.8959);transform-origin:0 0;">S<u>h</u>ow name of conductor</span>
<span class="t" id="t53" style="left:182px;top:426px;font-size:12px;transform:translateX(0.61px) scaleX(0.8783);transform-origin:0 0;">Position:</span>
<span class="t" id="t54" style="left:256px;top:427px;font-size:12px;transform:translateX(0.07px) scaleX(0.8768);transform-origin:0 0;">to endpoints</span>
<span class="t" id="t55" style="left:255px;top:443px;font-size:12px;transform:translateX(0.63px) scaleX(0.9037);transform-origin:0 0;">cen<u>t</u>ered</span>
<span class="t" id="t56" style="left:182px;top:465px;font-size:12px;transform:translateX(0.99px) scaleX(0.8897);transform-origin:0 0;"><u>X</u>-Offset:</span>
<span class="t" id="t57" style="left:242px;top:466px;font-size:12px;transform:translateX(0.99px) scaleX(0.8501);transform-origin:0 0;">6.5 mm</span>
<span class="t" id="t58" style="left:182px;top:489px;font-size:12px;transform:translateX(0.99px) scaleX(0.9124);transform-origin:0 0;"><u>Y</u>-Offset:</span>
<span class="t" id="t59" style="left:243px;top:490px;font-size:12px;transform:translateX(0.15px) scaleX(0.8473);transform-origin:0 0;">0.5 mm</span>
<span class="t" id="t60" style="left:261px;top:518px;font-size:12px;transform:translateX(0.44px) scaleX(0.9044);transform-origin:0 0;"><u>F</u>ont...</span>
<span class="t" id="t61" style="left:465px;top:404px;font-size:12px;transform:translateX(0.84px) scaleX(0.8720);transform-origin:0 0;">Show signal n<u>a</u>me</span>
<span class="t" id="t62" style="left:449px;top:426px;font-size:12px;transform:translateX(0.61px) scaleX(0.8783);transform-origin:0 0;">Position:</span>
<span class="t" id="t63" style="left:522px;top:425px;font-size:12px;transform:translateX(0.63px) scaleX(0.8875);transform-origin:0 0;">to en<u>d</u>points</span>
<span class="t" id="t64" style="left:522px;top:443px;font-size:12px;transform:translateX(0.27px) scaleX(0.9012);transform-origin:0 0;">cente<u>r</u>ed</span>
<span class="t" id="t65" style="left:449px;top:465px;font-size:12px;transform:translateX(0.99px) scaleX(0.8897);transform-origin:0 0;">X-Off<u>s</u>et:</span>
<span class="t" id="t66" style="left:510px;top:466px;font-size:12px;transform:translateX(0.43px) scaleX(0.8463);transform-origin:0 0;">6.5 mm</span>
<span class="t" id="t67" style="left:449px;top:489px;font-size:12px;transform:translateX(0.95px) scaleX(0.9155);transform-origin:0 0;">Y-<u>O</u>ffset:</span>
<span class="t" id="t68" style="left:510px;top:490px;font-size:12px;transform:translateX(0.39px) scaleX(0.8430);transform-origin:0 0;">0.5 mm</span>
<span class="t" id="t69" style="left:528px;top:518px;font-size:12px;transform:translateX(0.44px) scaleX(0.9044);transform-origin:0 0;">Fo<u>n</u>t...</span>
<span class="t" id="t70" style="left:197px;top:581px;font-size:12px;transform:translateX(0.68px) scaleX(0.8880);transform-origin:0 0;">Keep existing conductor logic lines of signal</span>
<span class="t" id="t71" style="left:206px;top:736px;font-size:12px;transform:translateX(0.49px) scaleX(0.9977);transform-origin:0 0;">OK</span>
<span class="t" id="t72" style="left:282px;top:736px;font-size:12px;transform:translateX(0.59px) scaleX(0.8857);transform-origin:0 0;">Apply</span>
<span class="t" id="t73" style="left:359px;top:736px;font-size:12px;transform:translateX(0.57px) scaleX(0.9282);transform-origin:0 0;">Cancel</span>
<span class="t" id="t74" style="left:662px;top:736px;font-size:12px;transform:translateX(0.02px) scaleX(0.9103);transform-origin:0 0;">Help</span>
</body></html>
